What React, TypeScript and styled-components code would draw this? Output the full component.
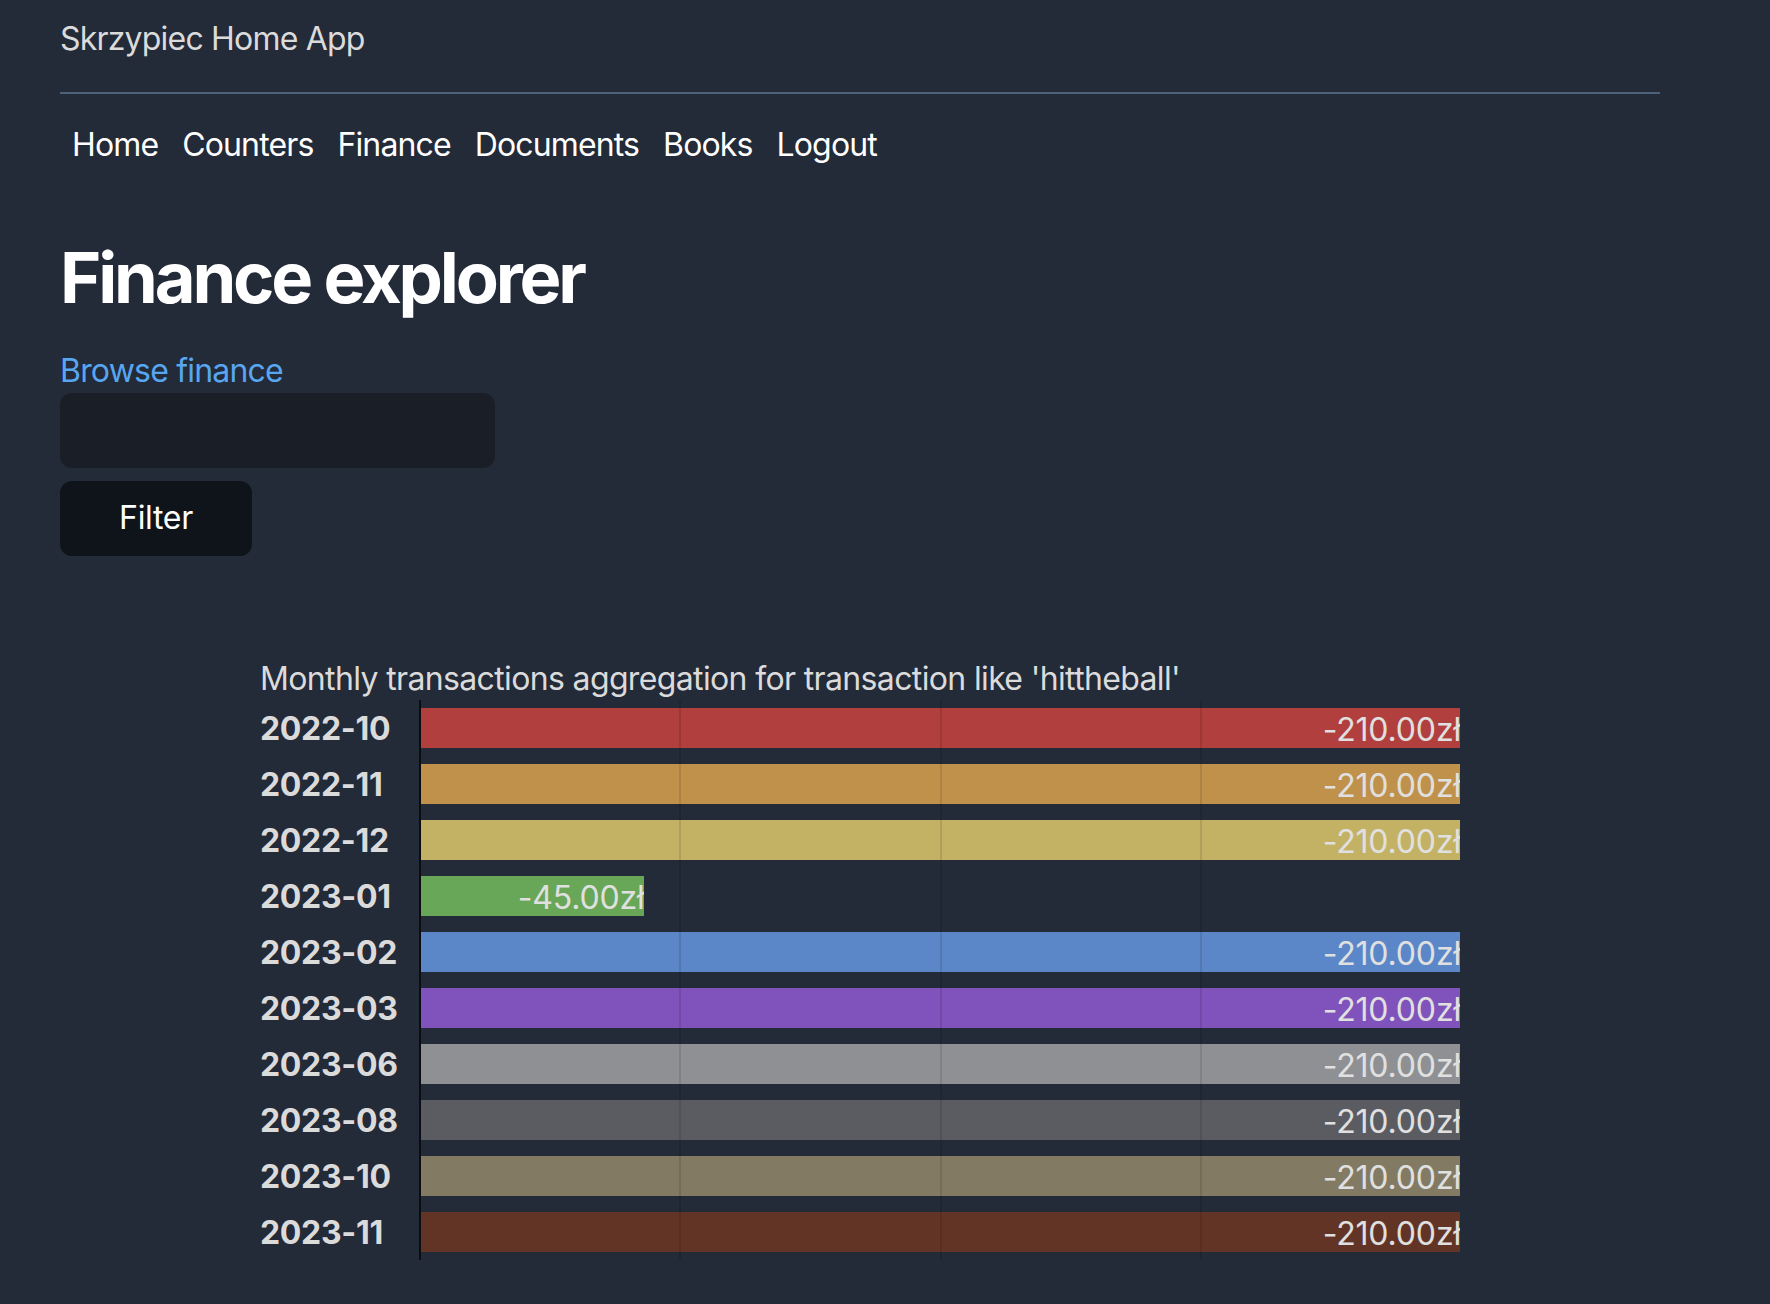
import React from "react";
import styled, { createGlobalStyle } from "styled-components";

const GlobalStyle = createGlobalStyle`
  html, body {
    margin: 0;
    padding: 0;
    background: #232a38;
  }
  body {
    font-family: Inter, "Noto Sans", "Liberation Sans", sans-serif;
    font-size: 32px;
    line-height: 1.4;
    letter-spacing: -0.02em;
    color: #dbdbdb;
  }
  * { box-sizing: border-box; }
`;

const Page = styled.div`
  width: 1660px;
  padding: 17px 0 60px 60px;
  min-height: 1304px;
`;

const Header = styled.header`
  display: flex;
  align-items: center;
  height: 45px;
`;

const Brand = styled.span`
  color: #dbdbdb;
  font-size: 32px;
  letter-spacing: -0.025em;
`;

const Rule = styled.hr`
  width: 1600px;
  height: 2px;
  margin: 30px 0 0 0;
  border: none;
  background: #4e617a;
`;

const Nav = styled.nav`
  display: flex;
  margin-top: 29px;
  height: 45px;
  align-items: center;
`;

const NavLink = styled.a`
  color: #ffffff;
  text-decoration: none;
  padding: 0 12px;
  font-size: 32px;
  letter-spacing: -0.027em;
`;

const Main = styled.main`
  width: 1600px;
  display: flex;
  flex-direction: column;
  align-items: flex-start;
`;

const Title = styled.h1`
  margin: 61px 0 0 0;
  font-size: 70.4px;
  line-height: 98.5px;
  font-weight: 700;
  letter-spacing: -0.045em;
  color: #ffffff;
`;

const BrowseLink = styled.a`
  display: block;
  margin-top: 21px;
  color: #58a6f0;
  text-decoration: none;
  line-height: 44px;
  letter-spacing: -0.025em;
`;

const SearchInput = styled.input`
  width: 435px;
  height: 75px;
  margin: 0;
  padding: 20px;
  border: none;
  border-radius: 12px;
  background: #1a1f27;
  color: #ffffff;
  font: inherit;
  outline: none;
`;

const FilterButton = styled.button`
  margin-top: 13px;
  width: 192px;
  height: 75px;
  padding: 0 40px;
  border: none;
  border-radius: 12px;
  background: #0e141a;
  color: #ffffff;
  font: inherit;
  letter-spacing: -0.01em;
  cursor: pointer;
`;

const Chart = styled.section`
  align-self: center;
  width: 1200px;
  margin-top: 100px;
`;

const Caption = styled.div`
  color: #dbdbdb;
  line-height: 43px;
  padding-top: 1px;
  height: 44px;
`;

const Rows = styled.div`
  position: relative;
`;

const Row = styled.div`
  display: grid;
  grid-template-columns: 159px 1fr;
  height: 56px;
`;

const RowLabel = styled.div`
  display: flex;
  align-items: center;
  padding-top: 3px;
  font-weight: 700;
  letter-spacing: -0.01em;
  color: #dbdbdb;
`;

const BarCell = styled.div`
  border-left: 2px solid #0b0d12;
  padding: 8px 0;
`;

const Bar = styled.div<{ $color: string }>`
  height: 40px;
  padding-top: 3px;
  background: ${(p) => p.$color};
  display: flex;
  justify-content: flex-end;
  align-items: center;
  overflow: hidden;
`;

const BarValue = styled.span`
  color: #e0e0e0;
  line-height: 37px;
  letter-spacing: -0.005em;
  white-space: nowrap;
  margin-right: -1px;
`;

const GridOverlay = styled.div`
  position: absolute;
  top: 0;
  bottom: 0;
  left: 161px;
  right: 0;
  display: flex;
  pointer-events: none;
`;

const GridCell = styled.div`
  flex: 1;
  border-right: 2px solid rgba(0, 0, 0, 0.1);
  &:last-child {
    border-right: none;
  }
`;

type Month = { month: string; value: number; color: string };

const data: Month[] = [
  { month: "2022-10", value: -210, color: "#b03f3e" },
  { month: "2022-11", value: -210, color: "#bf914a" },
  { month: "2022-12", value: -210, color: "#c3b264" },
  { month: "2023-01", value: -45, color: "#68a757" },
  { month: "2023-02", value: -210, color: "#5b86c8" },
  { month: "2023-03", value: -210, color: "#8052bb" },
  { month: "2023-06", value: -210, color: "#8f9094" },
  { month: "2023-08", value: -210, color: "#5a5c61" },
  { month: "2023-10", value: -210, color: "#827a62" },
  { month: "2023-11", value: -210, color: "#623426" },
];

const maxAbs = 210;

export default function App() {
  return (
    <>
      <GlobalStyle />
      <Page>
        <Header>
          <Brand>Skrzypiec Home App</Brand>
        </Header>
        <Rule />
        <Nav>
          {["Home", "Counters", "Finance", "Documents", "Books", "Logout"].map((l) => (
            <NavLink key={l} href="#">
              {l}
            </NavLink>
          ))}
        </Nav>
        <Main>
          <Title>Finance explorer</Title>
          <BrowseLink href="#">Browse finance</BrowseLink>
          <SearchInput type="text" />
          <FilterButton>Filter</FilterButton>
          <Chart>
            <Caption>Monthly transactions aggregation for transaction like 'hittheball'</Caption>
            <Rows>
              {data.map((d) => (
                <Row key={d.month}>
                  <RowLabel>{d.month}</RowLabel>
                  <BarCell>
                    <Bar
                      $color={d.color}
                      style={{ width: `${(Math.abs(d.value) / maxAbs) * 100}%` }}
                    >
                      <BarValue>{d.value.toFixed(2)}zł</BarValue>
                    </Bar>
                  </BarCell>
                </Row>
              ))}
              <GridOverlay>
                <GridCell />
                <GridCell />
                <GridCell />
                <GridCell />
              </GridOverlay>
            </Rows>
          </Chart>
        </Main>
      </Page>
    </>
  );
}
